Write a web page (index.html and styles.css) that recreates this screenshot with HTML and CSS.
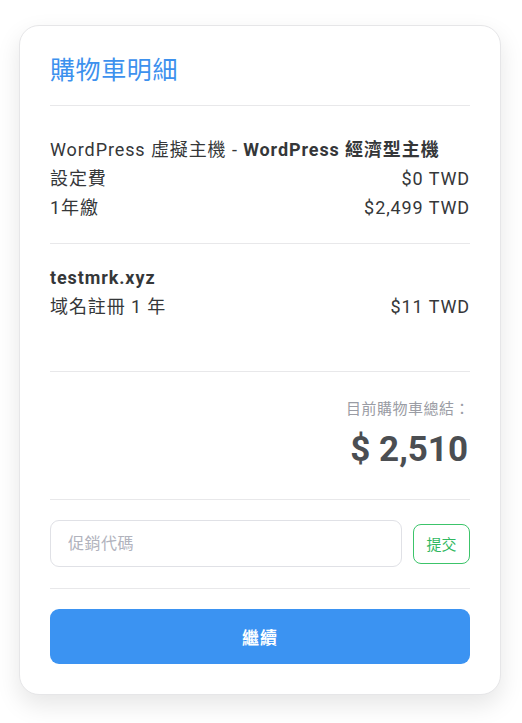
FILE: index.html
```html
<!DOCTYPE html>
<html lang="zh-Hant">
<head>
<meta charset="utf-8">
<link rel="stylesheet" href="styles.css">
</head>
<body>
<div class="card">
  <h2 class="title">購物車明細</h2>
  <div class="section hosting">
    <div class="product"><span>WordPress 虛擬主機 - </span><b>WordPress 經濟型主機</b></div>
    <div class="row"><span>設定費</span><span>$0 TWD</span></div>
    <div class="row"><span>1年繳</span><span>$2,499 TWD</span></div>
  </div>
  <div class="section domain">
    <div class="product"><b>testmrk.xyz</b></div>
    <div class="row"><span>域名註冊 1 年</span><span>$11 TWD</span></div>
  </div>
  <div class="section total">
    <div class="total-label">目前購物車總結：</div>
    <div class="total-amount">$ 2,510</div>
  </div>
  <div class="section promo">
    <input class="promo-input" type="text" placeholder="促銷代碼">
    <button class="promo-btn">提交</button>
  </div>
  <div class="section last">
    <button class="continue">繼續</button>
  </div>
</div>
</body>
</html>
```

FILE: styles.css
```css
html, body {
  margin: 0;
  padding: 0;
  background: #ffffff;
}
html { min-height: 100%; }
body {
  min-height: 723px;
  box-sizing: border-box;
  font-family: Roboto, "Noto Sans CJK TC", sans-serif;
  color: #353739;
  padding: 25px 22px 0 19px;
}
.card {
  width: 420px;
  background: #fff;
  border: 1px solid #e6e6e8;
  border-radius: 20px;
  box-shadow: 0 10px 24px rgba(0,0,0,0.10);
  padding: 0 30px;
}
.title {
  margin: 0;
  font-size: 25px;
  font-weight: 400;
  letter-spacing: 0.6px;
  color: #3d91ee;
  line-height: 32px;
  padding: 29px 0 18px;
  border-bottom: 1px solid #e8e8ea;
}
.section {
  border-bottom: 1px solid #e8e8ea;
}
.hosting {
  padding: 29px 0 21px;
}
.product, .row {
  font-size: 18px;
  letter-spacing: 0.9px;
  line-height: 29px;
}
.product b { font-weight: 700; }
.row {
  display: flex;
  justify-content: space-between;
}
.domain {
  padding: 19px 0 50px;
}
.total {
  padding: 25px 0 26px;
  text-align: right;
}
.total-label {
  font-size: 15px;
  letter-spacing: 0.5px;
  color: #9a9ca4;
  line-height: 24px;
}
.total-amount {
  font-size: 35px;
  font-weight: 700;
  color: #4b4e52;
  line-height: 46px;
  margin-top: 6px;
  padding-right: 2px;
}
.promo {
  display: flex;
  align-items: center;
  gap: 11px;
  padding: 20px 0 21px;
}
.promo-input {
  flex: 1;
  height: 47px;
  box-sizing: border-box;
  border: 1px solid #e0e1e6;
  border-radius: 9px;
  padding: 0 17px;
  font-size: 16px;
  letter-spacing: 0.5px;
  font-family: Roboto, "Noto Sans CJK TC", sans-serif;
  color: #333;
  outline: none;
}
.promo-input::placeholder { color: #b1b3bd; }
.promo-btn {
  width: 57px;
  height: 40px;
  background: #fff;
  border: 1px solid #3cc46a;
  border-radius: 8px;
  color: #31b85f;
  font-size: 15px;
  font-family: Roboto, "Noto Sans CJK TC", sans-serif;
  padding: 0;
}
.last {
  border-bottom: none;
  padding: 20px 0 30px;
}
.continue {
  display: block;
  width: 100%;
  height: 55px;
  border: none;
  border-radius: 9px;
  background: #3b93f2;
  color: #fff;
  font-size: 17px;
  letter-spacing: 1px;
  font-weight: 700;
  font-family: Roboto, "Noto Sans CJK TC", sans-serif;
}
```
